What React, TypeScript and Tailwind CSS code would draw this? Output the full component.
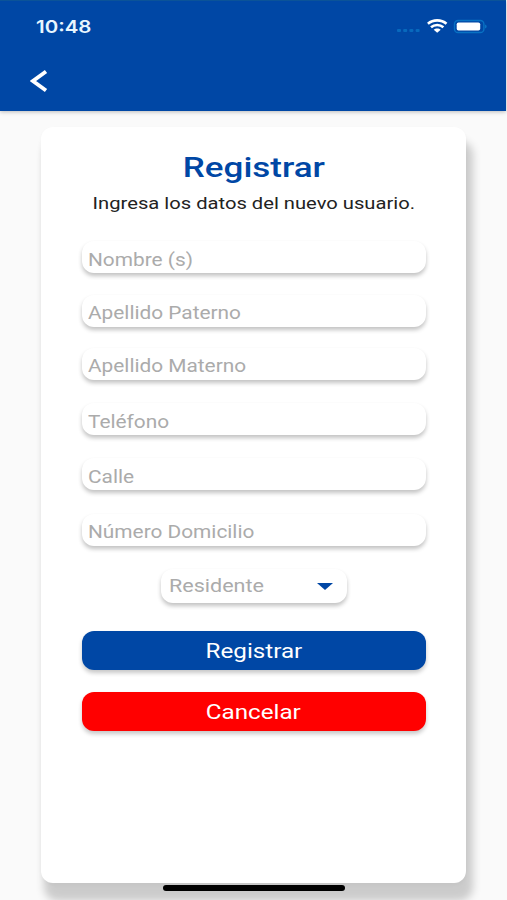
const fields = [
  { label: "Nombre (s)", box: "mt-[26px] h-8 pb-px" },
  { label: "Apellido Paterno", box: "mt-[22px] h-8 pb-0.5" },
  { label: "Apellido Materno", box: "mt-[21px] h-8 pb-0.5" },
  { label: "Teléfono", box: "mt-[23px] h-8 pb-px" },
  { label: "Calle", box: "mt-[23px] h-8 pb-px" },
  { label: "Número Domicilio", box: "mt-[24px] h-8 pb-0.5" },
];

function StatusBar() {
  return (
    <div className="flex h-[51px] items-center justify-between pl-9 pr-[18px]">
      <span className="origin-left scale-x-[1.17] text-[17.5px] font-semibold leading-none text-[#e8f6ff] font-['Inter','Liberation_Sans',sans-serif]">
        10:48
      </span>
      <svg width="92" height="20" viewBox="0 0 92 20" fill="none">
        <g fill="#0869bd">
          <rect x="1" y="12" width="4" height="3" rx="1" />
          <rect x="7.2" y="12" width="4" height="3" rx="1" />
          <rect x="13.4" y="12" width="4" height="3" rx="1" />
          <rect x="19.6" y="12" width="4" height="3" rx="1" />
        </g>
        <g stroke="#fff" strokeWidth="2.6">
          <path d="M31.9 6.8C37.2 2.2 45.2 2.2 50.5 6.8" />
          <path d="M35 10.2C38.5 7.2 43.9 7.2 47.4 10.2" />
        </g>
        <path d="M37.7 12.8C39.5 11.1 42.9 11.1 44.7 12.8L41.2 15.7Z" fill="#fff" />
        <rect x="58.5" y="3.5" width="29.4" height="12" rx="3.6" stroke="#0872c4" strokeWidth="1.4" />
        <rect x="60.7" y="5.5" width="23.5" height="8" rx="1.8" fill="#fff" />
        <path d="M89.3 7.5C90.9 8.1 90.9 10.9 89.3 11.5Z" fill="#0f86d0" />
      </svg>
    </div>
  );
}

export default function App() {
  return (
    <div className="relative flex h-[900px] w-[507px] flex-col overflow-hidden bg-[#fafafa] font-['Roboto','Liberation_Sans',sans-serif]">
      <header className="relative h-[111px] w-[506px] shrink-0 border-t border-[#0b5398] bg-[#0047a5] shadow-[0_1px_4px_rgba(0,0,0,0.25)]">
        <StatusBar />
        <button className="ml-[30px] mt-[17px] block" aria-label="Regresar">
          <svg width="18" height="24" viewBox="0 0 18 24" fill="none" stroke="#fff" strokeWidth="3.8">
            <path d="M16 2.5L3 12L16 21.5" />
          </svg>
        </button>
      </header>

      <main className="ml-[41px] mt-4 flex h-[756px] w-[425px] shrink-0 flex-col items-center rounded-xl bg-white shadow-[5px_16px_9px_2px_rgba(0,0,0,0.19),0_2px_4px_rgba(0,0,0,0.03)]">
        <h1 className="mt-[25px] scale-x-[1.25] text-[28px] font-medium leading-8 text-[#0047a5]">Registrar</h1>
        <p className="mt-[7px] scale-x-[1.187] whitespace-nowrap text-[17px] leading-6 text-[#222]">
          Ingresa los datos del nuevo usuario.
        </p>

        {fields.map((field) => (
          <div
            key={field.label}
            className={`${field.box} flex w-[344px] shrink-0 items-end rounded-xl bg-white pl-1.5 shadow-[0_3px_4px_rgba(0,0,0,0.24)]`}
          >
            <span className="origin-left scale-x-[1.19] whitespace-nowrap text-[17.5px] leading-6 text-[#ababab]">
              {field.label}
            </span>
          </div>
        ))}

        <div className="mt-[23px] flex h-[34px] w-[186px] shrink-0 items-center justify-between rounded-xl bg-white pl-2 pr-3.5 shadow-[0_3px_4px_rgba(0,0,0,0.24)]">
          <span className="origin-left scale-x-[1.23] text-[17.5px] leading-6 text-[#ababab]">Residente</span>
          <svg width="16" height="7" viewBox="0 0 16 7">
            <path d="M0 0H16L8 7Z" fill="#0047a5" />
          </svg>
        </div>

        <button className="mt-7 flex h-[39px] w-[344px] shrink-0 items-center justify-center rounded-xl bg-[#0047a5] text-white shadow-[0_3px_4px_rgba(0,0,0,0.22)]">
          <span className="scale-x-[1.21] text-[20px] leading-6">Registrar</span>
        </button>
        <button className="mt-[22px] flex h-[39px] w-[344px] shrink-0 items-center justify-center rounded-xl bg-[#ff0000] text-white shadow-[0_3px_4px_rgba(0,0,0,0.22)]">
          <span className="scale-x-[1.21] text-[20px] leading-6">Cancelar</span>
        </button>
      </main>

      {/* home indicator */}
      <div className="absolute left-[163px] top-[885px] h-1.5 w-[182px] rounded-full bg-black" />
    </div>
  );
}
